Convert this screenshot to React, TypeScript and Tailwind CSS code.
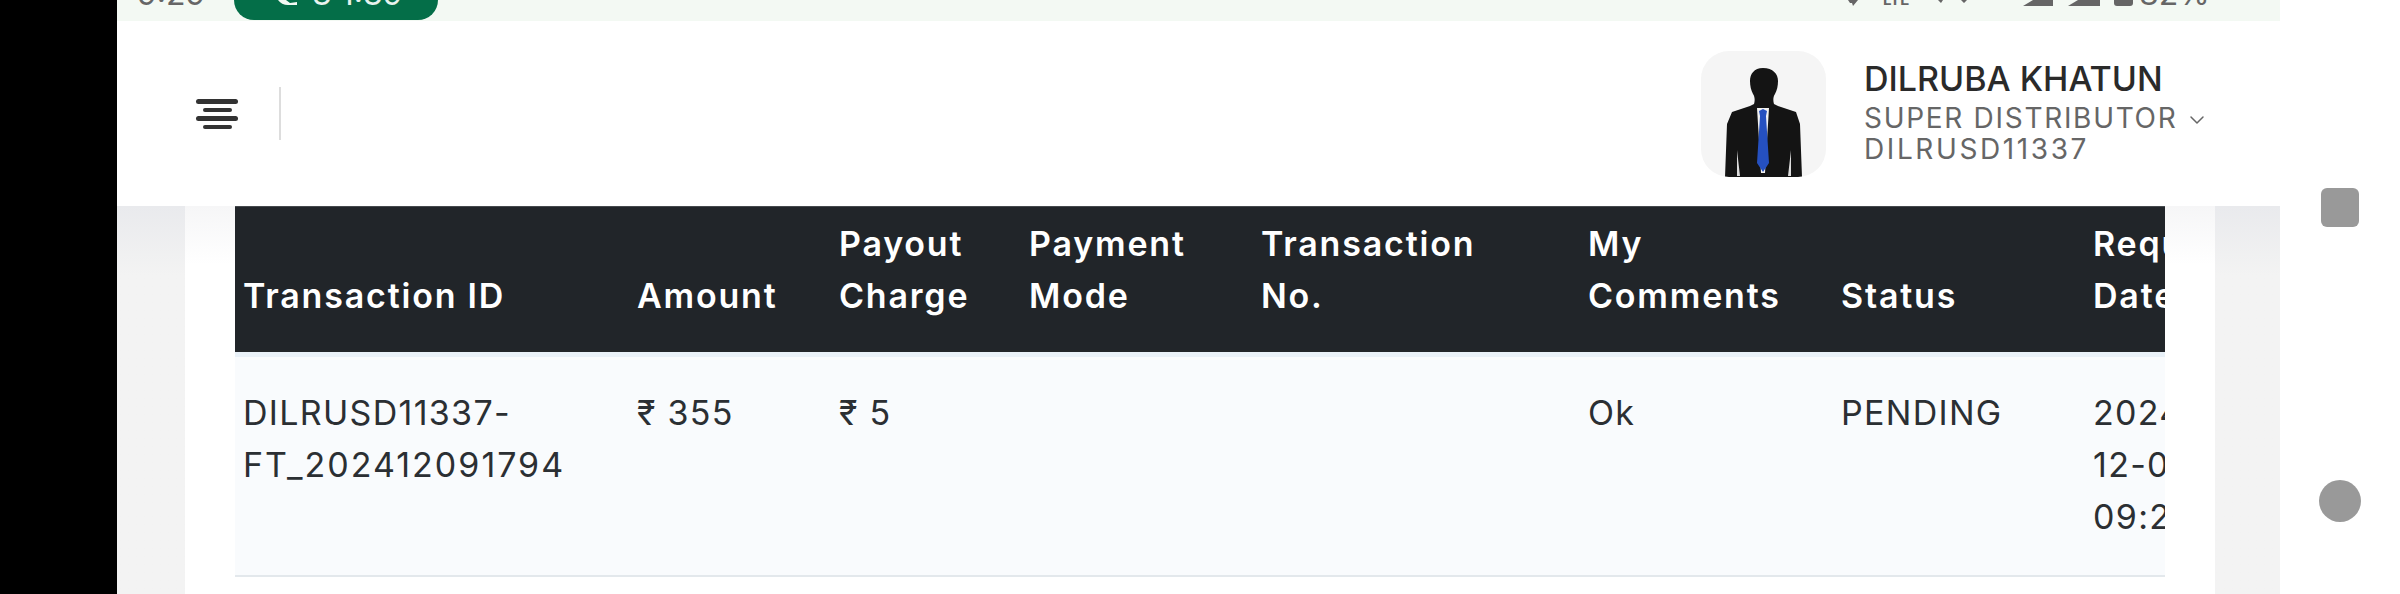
import { ChevronDown } from 'lucide-react';

const columns = [
  { lines: ['Transaction ID'], width: 'w-[394px]' },
  { lines: ['Amount'], width: 'w-[202px]' },
  { lines: ['Payout', 'Charge'], width: 'w-[190px]' },
  { lines: ['Payment', 'Mode'], width: 'w-[232px]' },
  { lines: ['Transaction', 'No.'], width: 'w-[327px]' },
  { lines: ['My', 'Comments'], width: 'w-[253px]' },
  { lines: ['Status'], width: 'w-[252px]' },
  { lines: ['Request', 'Date'], width: 'w-[200px]' },
];

const row = [
  ['DILRUSD11337-', 'FT_202412091794'],
  ['₹ 355'],
  ['₹ 5'],
  [],
  [],
  ['Ok'],
  ['PENDING'],
  ['2024-', '12-09', '09:29'],
];

function Avatar() {
  return (
    <div className="h-[126px] w-[125px] shrink-0 overflow-hidden rounded-[28px] bg-[#f5f5f5]">
      <svg viewBox="0 0 125 126" className="h-full w-full">
        <path
          d="M62 17c-9 0-13 6-13 13 0 5 1 9 3 13 2 3 2 7 1 10l-4 2-18 6-5 12-2 53h77l-2-53-4-12-18-6-4-2c-1-3-1-7 1-10 2-4 3-8 3-13 0-7-5-13-15-13z"
          fill="#141414"
        />
        <path d="M56 57h12l-4 65h-4z" fill="#f2f2f2" />
        <path d="M58 60l4-2 4 2-1 5 3 47-6 9-6-9 3-47z" fill="#2550c0" />
        <path d="M36 99l3 26h-3zM90 99v26h-3z" fill="#dcdcdc" />
      </svg>
    </div>
  );
}

function StatusBar() {
  return (
    <div className="flex h-[21px] overflow-hidden bg-[#f3f9f3] text-[32px] leading-[32px]">
      <div className="-mt-[22px] ml-[20px] w-[97px] text-[#666]">9:29</div>
      <div className="flex h-[20px] w-[204px] gap-[15px] overflow-hidden rounded-b-[30px] bg-[#046e48] pl-[44px] text-[#e8f3ee]">
        <svg viewBox="0 0 19 5" className="h-[5px] w-[19px]">
          <path d="M0 0h8l4 3 7-1v3H10C6 5 2 3 0 0z" fill="#f3f9f3" />
        </svg>
        <div className="-mt-[22px] whitespace-nowrap">3 1:39</div>
      </div>
      <svg viewBox="0 0 18 6" className="ml-[1404px] h-[6px] w-[18px]">
        <path d="M6 0h10l-5 6-1-3H8z" fill="#666" />
      </svg>
      <div className="-mt-[16px] ml-[23px] w-[32px] text-[15px] font-bold text-[#666]">LTE</div>
      <svg viewBox="0 0 29 3" className="ml-[23px] h-[3px] w-[29px]">
        <path d="M0 0h5L3 3zM23 0h6l-3 3z" fill="#666" />
      </svg>
      <svg viewBox="0 0 30 6" className="ml-[56px] h-[6px] w-[30px]">
        <path d="M10 0h20v6H0zM21 0h8v4h-8z" fill="#666" />
      </svg>
      <svg viewBox="0 0 32 6" className="ml-[15px] h-[6px] w-[32px]">
        <path d="M10 0h22v6H0z" fill="#666" />
      </svg>
      <div className="ml-[14px] h-[6px] w-[19px] rounded-b-[3px] bg-[#666]" />
      <div className="-mt-[22px] ml-[6px] text-[#666]">82%</div>
    </div>
  );
}

function Header() {
  return (
    <div className="flex h-[185px] items-center justify-between bg-white pl-[79px] pr-[75px]">
      <div className="flex items-center">
        <div className="flex w-[42px] flex-col items-center gap-[4px]">
          <span className="h-[5px] w-[42px] rounded-full bg-[#333]" />
          <span className="h-[4px] w-[29px] rounded-full bg-[#333]" />
          <span className="h-[5px] w-[42px] rounded-full bg-[#333]" />
          <span className="h-[4px] w-[29px] rounded-full bg-[#333]" />
        </div>
        <div className="ml-[41px] h-[53px] w-[2px] bg-[#ddd]" />
      </div>
      <div className="flex items-center gap-[38px]">
        <Avatar />
        <div className="-mt-[5px] w-[341px]">
          <div className="text-[34px] leading-[44px] font-medium text-[#2a2a2a]">DILRUBA KHATUN</div>
          <div className="mt-[2px] flex items-center whitespace-nowrap text-[28px] leading-[31px] tracking-[1.7px] text-[#666]">
            SUPER DISTRIBUTOR
            <ChevronDown size={24} strokeWidth={1.5} className="ml-[8px] mt-[2px] shrink-0" />
          </div>
          <div className="text-[28px] leading-[31px] tracking-[2.6px] text-[#666]">DILRUSD11337</div>
        </div>
      </div>
    </div>
  );
}

function TransactionTable() {
  return (
    <div className="w-[1930px] overflow-hidden">
      <table className="w-[2050px] table-fixed border-separate border-spacing-0 text-[34px] leading-[52px] tracking-[1.3px]">
        <thead>
          <tr className="bg-[#212529] text-white">
            {columns.map((col) => (
              <th
                key={col.lines[0]}
                className={`${col.width} h-[146px] border-t border-t-[#45494d] px-[8px] pb-[30px] text-left align-bottom font-semibold tracking-[1.8px]`}
              >
                {col.lines.map((line) => (
                  <div key={line} className="whitespace-nowrap">{line}</div>
                ))}
              </th>
            ))}
          </tr>
        </thead>
        <tbody>
          <tr className="bg-[#f9fbfd] text-[#2b2f33]">
            {row.map((cell, i) => (
              <td
                key={i}
                className="h-[225px] border-t-[5px] border-b-[2px] border-t-[#e9f1f8] border-b-[#e3e8ec] px-[8px] pt-[30px] align-top"
              >
                {cell.map((line) => (
                  <div key={line} className={line.startsWith('FT_') ? 'whitespace-nowrap tracking-[2px]' : 'whitespace-nowrap'}>
                    {line}
                  </div>
                ))}
              </td>
            ))}
          </tr>
        </tbody>
      </table>
    </div>
  );
}

export default function App() {
  return (
    <div className="flex h-[594px] w-[2400px] overflow-hidden bg-white font-['Inter',sans-serif]">
      <div className="w-[117px] shrink-0 bg-black" />
      <div className="flex w-[2163px] shrink-0 flex-col">
        <StatusBar />
        <Header />
        <div className="flex flex-1 bg-linear-to-b from-[#e9eaed] to-[#f3f3f3] to-[18%] px-[68px]">
          <div className="flex-1 bg-linear-to-b from-[#f6f6f7] to-white to-[15%] px-[50px]">
            <TransactionTable />
          </div>
        </div>
      </div>
      <div className="flex flex-1 flex-col items-center pt-[188px]">
        <div className="h-[39px] w-[38px] rounded-[6px] bg-[#999]" />
        <div className="mt-[253px] h-[42px] w-[42px] rounded-full bg-[#999]" />
      </div>
    </div>
  );
}
